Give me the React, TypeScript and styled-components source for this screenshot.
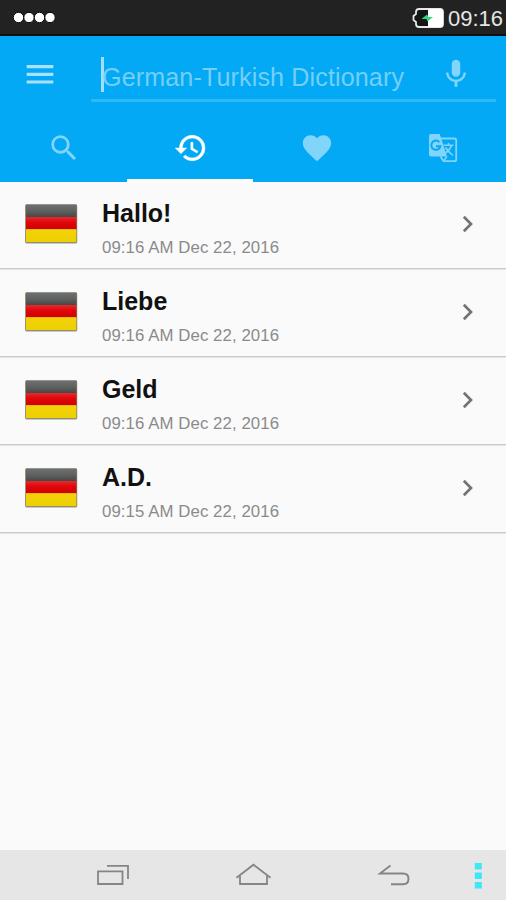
import React from "react";
import styled, { createGlobalStyle } from "styled-components";
import { MdMic, MdSearch, MdFavorite } from "react-icons/md";

const GlobalStyle = createGlobalStyle`
  * { box-sizing: border-box; }
  body { margin: 0; background: #fafafa; font-family: "Liberation Sans", Arial, sans-serif; }
`;

const Screen = styled.div`
  width: 506px;
  height: 900px;
  display: flex;
  flex-direction: column;
  overflow: hidden;
  background: #fafafa;
`;

const StatusBar = styled.div`
  height: 36px;
  flex: none;
  display: flex;
  align-items: center;
  justify-content: space-between;
  padding: 0 3px 0 12px;
  background: #222;
  border-bottom: 2px solid #0c0e12;
`;

const StatusRight = styled.div`
  display: flex;
  align-items: center;
  gap: 4px;

  svg {
    margin-top: 2px;
  }
`;

const Clock = styled.span`
  font-size: 22px;
  line-height: 26px;
  padding-top: 4px;
  color: #e6e6e6;
`;

const Header = styled.header`
  height: 145.5px;
  flex: none;
  display: flex;
  flex-direction: column;
  background: #03a9f4;
`;

const SearchRow = styled.div`
  height: 79px;
  display: flex;
  padding: 0 10px 0 22px;
`;

const MenuButton = styled.button`
  width: 69px;
  padding: 0 0 3px;
  border: 0;
  background: none;
  display: flex;
  align-items: center;
  color: #a9e1fc;
`;

const SearchField = styled.div`
  flex: 1;
  height: 66px;
  display: flex;
  align-items: center;
  justify-content: space-between;
  padding: 16px 23px 0 10px;
  border-bottom: 3px solid #2fb8f6;
`;

const Entry = styled.div`
  display: flex;
  align-items: center;
`;

const Caret = styled.span`
  width: 3px;
  height: 35px;
  margin: -3px -2px 0 0;
  background: #a0dffb;
`;

const Placeholder = styled.span`
  font-size: 25.1px;
  line-height: 30px;
  letter-spacing: 0.13px;
  padding-top: 2px;
  white-space: nowrap;
  color: #74cff9;
`;

const MicButton = styled.span`
  display: flex;
  color: #81d4fa;
  margin-bottom: 3px;
`;

const Tabs = styled.nav`
  flex: 1;
  display: grid;
  grid-template-columns: repeat(4, 1fr);
`;

const Tab = styled.div<{ $active?: boolean }>`
  display: flex;
  align-items: center;
  justify-content: center;
  color: ${(p) => (p.$active ? "#fff" : "#81d4fa")};
  border-bottom: 3px solid ${(p) => (p.$active ? "#fff" : "transparent")};
  padding: 2px 0 0 1px;
`;

const List = styled.main`
  flex: 1;
`;

const Row = styled.div`
  height: 88px;
  display: flex;
  align-items: center;
  padding: 0 20px 4px 24px;
  box-shadow: inset 0 -1px #e4e4e4, inset 0 -2px #cbcbcb;
`;

const Info = styled.div`
  flex: 1;
  margin-left: 24px;
  padding-top: 8px;
`;

const Word = styled.div`
  font-size: 25px;
  font-weight: 700;
  line-height: 30px;
  color: #111;
`;

const Time = styled.div`
  margin-top: 10px;
  font-size: 16.8px;
  line-height: 20px;
  letter-spacing: 0.08px;
  color: #8a8a8a;
`;

const NavBar = styled.footer`
  height: 50.5px;
  flex: none;
  display: flex;
  align-items: center;
  padding: 3px 0 0 96px;
  background: #e6e6e6;
`;

const NavItem = styled.span<{ $width: number }>`
  width: ${(p) => p.$width}px;
  display: flex;
`;

const SignalDots = () => (
  <svg width="46" height="14" viewBox="0 0 46 14">
    {[6.5, 17, 27.5, 38].map((x) => (
      <circle key={x} cx={x} cy="7.5" r="5.2" fill="#fff" stroke="#050505" strokeWidth="1" />
    ))}
  </svg>
);

const Battery = () => (
  <svg width="32" height="20" viewBox="0 0 32 20">
    <path d="M7 1H28Q31 1 31 4V16Q31 19 28 19H7Q4 19 4 16V14L1.5 12V8L4 6V4Q4 1 7 1Z" fill="#151515" stroke="#e8e8e8" strokeWidth="1.8" strokeLinejoin="round" />
    <path d="M16 1H28Q31 1 31 4V16Q31 19 28 19H16Z" fill="#fff" />
    <path d="M9.5 11L15 6.5L16.5 9H21L15.5 13.5L14.5 11Z" fill="#31d780" />
  </svg>
);

const MenuIcon = () => (
  <svg width="36" height="24" viewBox="0 0 36 24" fill="none" stroke="currentColor" strokeWidth="3.2">
    <path d="M4.7 4.6H31.3M4.7 12.3H31.3M4.7 20H31.3" />
  </svg>
);

const HistoryIcon = () => (
  <svg width="34" height="34" viewBox="-.6 0 24 24" fill="currentColor" stroke="currentColor" strokeWidth=".35">
    <path d="M13 3c-4.97 0-9 4.03-9 9H1l3.89 3.89.07.14L9 12H6c0-3.87 3.13-7 7-7s7 3.13 7 7-3.13 7-7 7c-1.93 0-3.68-.79-4.94-2.06l-1.42 1.42A8.954 8.954 0 0 0 13 21a9 9 0 0 0 0-18zm-1 5v5l4.28 2.54.72-1.21-3.5-2.08V8H12z" />
  </svg>
);

const TranslateIcon = () => (
  <svg width="32" height="32" viewBox="0 0 32 32">
    <path d="M14 6.5H27.5Q29.2 6.5 29.2 8.2V27.5Q29.2 29.2 27.5 29.2H16.5L13.5 24.5" fill="none" stroke="currentColor" strokeWidth="1.8" />
    <path d="M4 2H12.7L20 24.6H4Q2 24.6 2 22.6V4Q2 2 4 2Z" fill="currentColor" />
    <path d="M12.3 10.1A4.6 4.6 0 1 0 13.4 14.2H9" fill="none" stroke="#03a9f4" strokeWidth="2" />
    <path d="M16.5 13.2H26.5M21.5 11V13.2M24.5 13.2Q23 18 18.5 21M18.5 15.5Q21 19.5 26 23.5" fill="none" stroke="currentColor" strokeWidth="1.6" />
    <path d="M20 24.6L16.8 28.5" stroke="currentColor" strokeWidth="1.5" />
  </svg>
);

const Flag = () => (
  <svg width="54" height="42" viewBox="0 0 54 42">
    <defs>
      <linearGradient id="coal" x2="0" y2="1">
        <stop stopColor="#6f7070" />
        <stop offset=".5" stopColor="#606161" />
        <stop offset="1" stopColor="#464848" />
      </linearGradient>
      <linearGradient id="crimson" x2="0" y2="1">
        <stop stopColor="#e62a2c" />
        <stop offset=".45" stopColor="#e0070c" />
        <stop offset="1" stopColor="#cf0000" />
      </linearGradient>
      <linearGradient id="gold" x2="0" y2="1">
        <stop stopColor="#f2d20c" />
        <stop offset="1" stopColor="#ecd000" />
      </linearGradient>
    </defs>
    <rect x="1" y="2" width="52.5" height="39" rx="2" fill="#000" opacity=".2" />
    <rect x="1.3" y="1.5" width="51.7" height="38.2" rx="1" fill="#857b55" />
    <rect x="2" y="1.5" width="50.4" height="12.5" fill="url(#coal)" />
    <rect x="2" y="14" width="50.4" height="12.2" fill="url(#crimson)" />
    <rect x="2" y="26.2" width="50.4" height="12.8" fill="url(#gold)" />
  </svg>
);

const Chevron = () => (
  <svg width="30" height="24" viewBox="0 0 30 24">
    <path d="M7.8 4.7L15 12L7.8 19.3" fill="none" stroke="#737373" strokeWidth="2.7" />
  </svg>
);

const Recents = () => (
  <svg width="34" height="26" viewBox="0 0 34 26" fill="none" stroke="#858585" strokeWidth="1.8">
    <path d="M2 8.3H26.5V21H2ZM11 2.8H32V16" />
  </svg>
);

const Home = () => (
  <svg width="38" height="26" viewBox="0 0 38 26" fill="none" stroke="#858585" strokeWidth="1.8">
    <path d="M6 13V21H33V13M2.5 14.7L19.5 1.7L36.5 14.7" />
  </svg>
);

const Back = () => (
  <svg width="34" height="26" viewBox="0 0 34 26" fill="none" stroke="#858585" strokeWidth="1.9">
    <path d="M13.5 2.5L3 10.5H26Q31.5 10.5 31.5 15.7Q31.5 21.2 26 21.2H14" />
  </svg>
);

const More = () => (
  <svg width="8" height="26" viewBox="0 0 8 26" fill="#3ce8f4">
    <rect x=".8" y="0" width="7" height="6.5" />
    <rect x=".8" y="9.5" width="7" height="6.5" />
    <rect x=".8" y="19" width="7" height="6.5" />
  </svg>
);

const history = [
  { word: "Hallo!", time: "09:16 AM Dec 22, 2016" },
  { word: "Liebe", time: "09:16 AM Dec 22, 2016" },
  { word: "Geld", time: "09:16 AM Dec 22, 2016" },
  { word: "A.D.", time: "09:15 AM Dec 22, 2016" },
];

export default function App() {
  return (
    <Screen>
      <GlobalStyle />
      <StatusBar>
        <SignalDots />
        <StatusRight>
          <Battery />
          <Clock>09:16</Clock>
        </StatusRight>
      </StatusBar>
      <Header>
        <SearchRow>
          <MenuButton aria-label="Menu">
            <MenuIcon />
          </MenuButton>
          <SearchField>
            <Entry>
              <Caret />
              <Placeholder>German-Turkish Dictionary</Placeholder>
            </Entry>
            <MicButton>
              <MdMic size={34} />
            </MicButton>
          </SearchField>
        </SearchRow>
        <Tabs>
          <Tab><MdSearch size={34} /></Tab>
          <Tab $active><HistoryIcon /></Tab>
          <Tab><MdFavorite size={34} /></Tab>
          <Tab><TranslateIcon /></Tab>
        </Tabs>
      </Header>
      <List>
        {history.map((item) => (
          <Row key={item.word}>
            <Flag />
            <Info>
              <Word>{item.word}</Word>
              <Time>{item.time}</Time>
            </Info>
            <Chevron />
          </Row>
        ))}
      </List>
      <NavBar>
        <NavItem $width={138}><Recents /></NavItem>
        <NavItem $width={143}><Home /></NavItem>
        <NavItem $width={97}><Back /></NavItem>
        <NavItem $width={8}><More /></NavItem>
      </NavBar>
    </Screen>
  );
}
